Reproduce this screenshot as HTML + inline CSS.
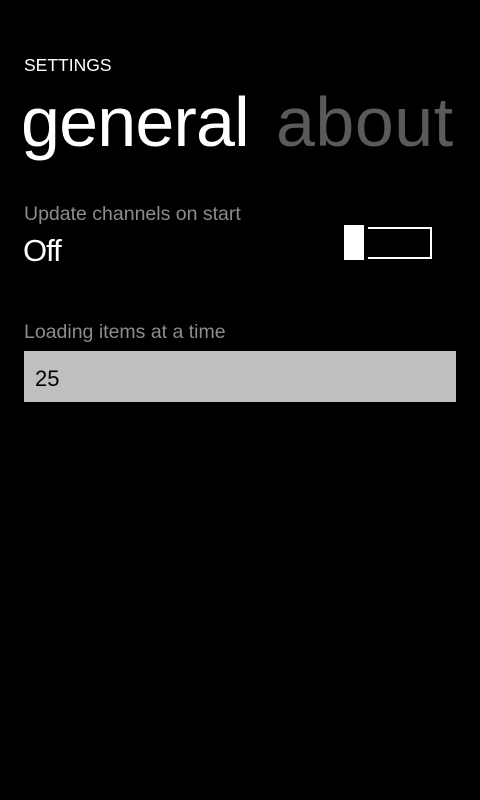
<!DOCTYPE html>
<html><head><meta charset="utf-8"><style>
html,body{margin:0;padding:0;background:#000;width:480px;height:800px;overflow:hidden;font-family:"Liberation Sans",sans-serif;}
.a{position:absolute;white-space:nowrap;line-height:1;}
</style></head><body>
<div class="a" style="left:24px;top:57px;font-size:17.5px;color:#fff;">SETTINGS</div>
<div class="a" style="left:21px;top:87px;font-size:70px;color:#fff;letter-spacing:-0.8px;">general</div>
<div class="a" style="left:276px;top:87px;font-size:70px;color:#5a5a5a;letter-spacing:0.5px;">about</div>
<div class="a" style="left:24px;top:205px;font-size:19.5px;color:#8c8c8c;">Update channels on start</div>
<div class="a" style="left:23px;top:235px;font-size:31px;color:#fff;letter-spacing:-1px;">Off</div>
<div style="position:absolute;left:344px;top:225px;width:20px;height:35px;background:#fff;"></div>
<div style="position:absolute;left:368px;top:227px;width:62px;height:28px;border:2px solid #fff;border-left:none;"></div>
<div class="a" style="left:24px;top:323px;font-size:19.5px;color:#8c8c8c;">Loading items at a time</div>
<div style="position:absolute;left:24px;top:351px;width:432px;height:51px;background:#bfbfbf;"></div>
<div class="a" style="left:35px;top:368px;font-size:22px;color:#000;">25</div>
</body></html>
